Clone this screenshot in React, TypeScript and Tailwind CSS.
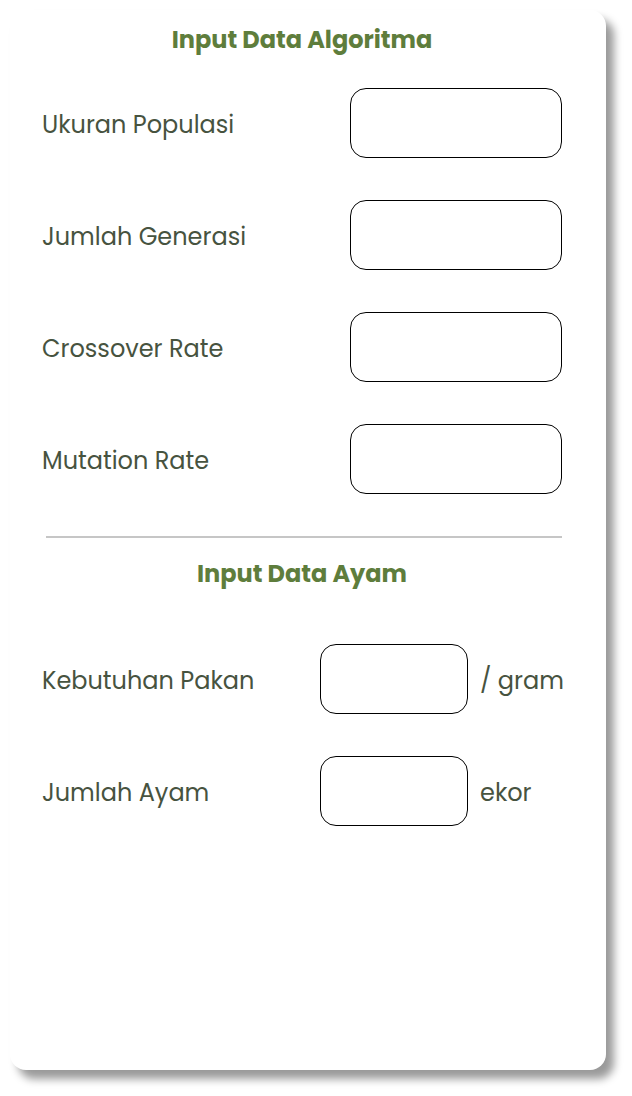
import React from 'react'

const algoFields = ['Ukuran Populasi', 'Jumlah Generasi', 'Crossover Rate', 'Mutation Rate']

const ayamFields = [
  { label: 'Kebutuhan Pakan', unit: '/ gram' },
  { label: 'Jumlah Ayam', unit: 'ekor' },
]

const App: React.FC = () => {
  return (
    <div className="min-h-[1096px] w-[632px] bg-white pl-[10px] pt-[10px] font-['Poppins','Inter',sans-serif]">
      <div className="flex h-[1060px] w-[596px] flex-col rounded-[16px] bg-white pb-4 pl-[32px] pr-[44px] pt-[14px] shadow-[8px_9px_9px_rgba(0,0,0,0.4)]">
        <h2 className="h-8 text-center text-[24px] font-bold leading-8 text-[#5e7d3c]">
          Input Data Algoritma
        </h2>

        <div className="mt-[32px] flex flex-col gap-[42px]">
          {algoFields.map((label) => (
            <div key={label} className="flex h-[70px] items-center justify-between">
              <span className="mt-1 text-[24px] text-[#47533f]">{label}</span>
              <input
                type="text"
                className="h-[70px] w-[212px] shrink-0 rounded-[16px] border border-black bg-white px-4 outline-none"
              />
            </div>
          ))}
        </div>

        <div className="ml-[4px] mt-[42px] h-[2px] bg-[#c6c6c6]" />

        <h2 className="mt-[20px] h-8 text-center text-[24px] font-bold leading-8 text-[#5e7d3c]">
          Input Data Ayam
        </h2>

        <div className="mt-[54px] flex flex-col gap-[42px]">
          {ayamFields.map((f) => (
            <div key={f.label} className="flex h-[70px] items-center">
              <span className="mt-1 w-[278px] shrink-0 text-[24px] text-[#47533f]">{f.label}</span>
              <input
                type="text"
                className="h-[70px] w-[148px] shrink-0 rounded-[16px] border border-black bg-white px-3 outline-none"
              />
              <span className="ml-[12px] mt-1 whitespace-nowrap text-[24px] text-[#47533f]">{f.unit}</span>
            </div>
          ))}
        </div>
      </div>
    </div>
  )
}

export default App
